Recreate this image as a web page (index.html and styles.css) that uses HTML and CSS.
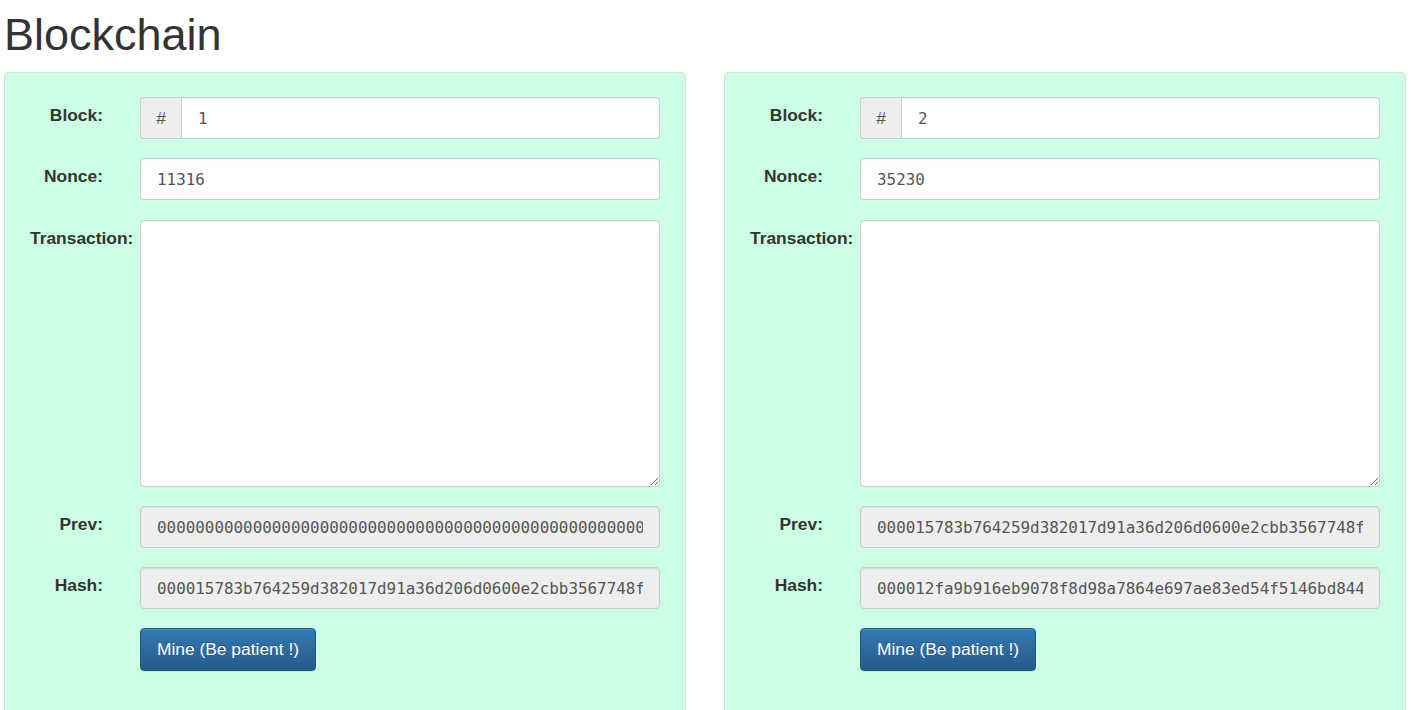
FILE: index.html
```html
<!DOCTYPE html>
<html>
<head>
<meta charset="utf-8">
<title>Blockchain</title>
<link rel="stylesheet" href="styles.css">
</head>
<body>
<h1 class="title">Blockchain</h1>
<div class="chain">
  <div class="block">
    <div class="row">
      <label class="lbl">Block:</label>
      <div class="group">
        <span class="addon">#</span>
        <input class="field field-grouped" type="text" value="1">
      </div>
    </div>
    <div class="row">
      <label class="lbl">Nonce:</label>
      <input class="field" type="text" value="11316">
    </div>
    <div class="row row-tx">
      <label class="lbl">Transaction:</label>
      <textarea class="field area"></textarea>
    </div>
    <div class="row">
      <label class="lbl">Prev:</label>
      <input class="field ro" type="text" readonly value="0000000000000000000000000000000000000000000000000000000000000000">
    </div>
    <div class="row">
      <label class="lbl">Hash:</label>
      <input class="field ro" type="text" readonly value="000015783b764259d382017d91a36d206d0600e2cbb3567748f46a33fe9297cf">
    </div>
    <div class="row">
      <span></span>
      <div><button class="btn">Mine (Be patient !)</button></div>
    </div>
  </div>
  <div class="block">
    <div class="row">
      <label class="lbl">Block:</label>
      <div class="group">
        <span class="addon">#</span>
        <input class="field field-grouped" type="text" value="2">
      </div>
    </div>
    <div class="row">
      <label class="lbl">Nonce:</label>
      <input class="field" type="text" value="35230">
    </div>
    <div class="row row-tx">
      <label class="lbl">Transaction:</label>
      <textarea class="field area"></textarea>
    </div>
    <div class="row">
      <label class="lbl">Prev:</label>
      <input class="field ro" type="text" readonly value="000015783b764259d382017d91a36d206d0600e2cbb3567748f46a33fe9297cf">
    </div>
    <div class="row">
      <label class="lbl">Hash:</label>
      <input class="field ro" type="text" readonly value="000012fa9b916eb9078f8d98a7864e697ae83ed54f5146bd84452e6a7c2d8f13">
    </div>
    <div class="row">
      <span></span>
      <div><button class="btn">Mine (Be patient !)</button></div>
    </div>
  </div>
</div>
</body>
</html>
```
FILE: styles.css
```css
* { box-sizing: border-box; }
html, body { margin: 0; padding: 0; background: #fff; }
body {
  font-family: "Liberation Sans", Arial, Helvetica, sans-serif;
  color: #333;
  font-size: 17.4px;
  line-height: 20px;
  overflow: hidden;
}
.title {
  margin: 11px 0 13px 4px;
  font-size: 45px;
  line-height: 48px;
  font-weight: 400;
  color: #333;
}
.chain {
  display: grid;
  grid-template-columns: 1fr 1fr;
  column-gap: 38px;
  padding: 0 5px 0 4px;
}
.block {
  background: #ccffe5;
  border: 1px solid #d5e3dc;
  border-radius: 4px;
  padding: 24px 25px 40px 0;
  display: flex;
  flex-direction: column;
  gap: 19px;
  min-height: 660px;
}
.row {
  display: grid;
  grid-template-columns: 135px 1fr;
  align-items: start;
}
.row-tx { margin-top: 1px; }
.lbl {
  font-weight: 700;
  text-align: right;
  white-space: nowrap;
  padding: 8px 37px 0 25px;
  overflow: visible;
}
.row-tx .lbl { text-align: left; }
.field {
  display: block;
  width: 100%;
  height: 42px;
  border: 1px solid #ccc;
  border-radius: 4px;
  padding: 0 16px;
  background: #fff;
  color: #555;
  font-family: "DejaVu Sans Mono", "Liberation Mono", monospace;
  font-size: 15.9px;
  box-shadow: inset 0 1px 1px rgba(0,0,0,.075);
  outline: none;
}
.area {
  height: 267px;
  resize: vertical;
  padding: 8px 16px;
}
.ro { background: #eee; }
.group { display: flex; }
.addon {
  flex: 0 0 41px;
  height: 42px;
  border: 1px solid #ccc;
  border-right: 0;
  border-radius: 4px 0 0 4px;
  background: #eee;
  color: #555;
  display: flex;
  align-items: center;
  justify-content: center;
  font-size: 17.4px;
}
.field-grouped {
  flex: 1;
  border-radius: 0 4px 4px 0;
}
.btn {
  height: 43px;
  width: 176px;
  border: 1px solid #245580;
  border-radius: 4px;
  background: linear-gradient(#337ab7, #265a88);
  color: #fff;
  font-family: "Liberation Sans", Arial, sans-serif;
  font-size: 17.4px;
  padding: 0;
  box-shadow: inset 0 1px 0 rgba(255,255,255,.15), 0 1px 1px rgba(0,0,0,.075);
  text-shadow: 0 -1px 0 rgba(0,0,0,.2);
}
```
